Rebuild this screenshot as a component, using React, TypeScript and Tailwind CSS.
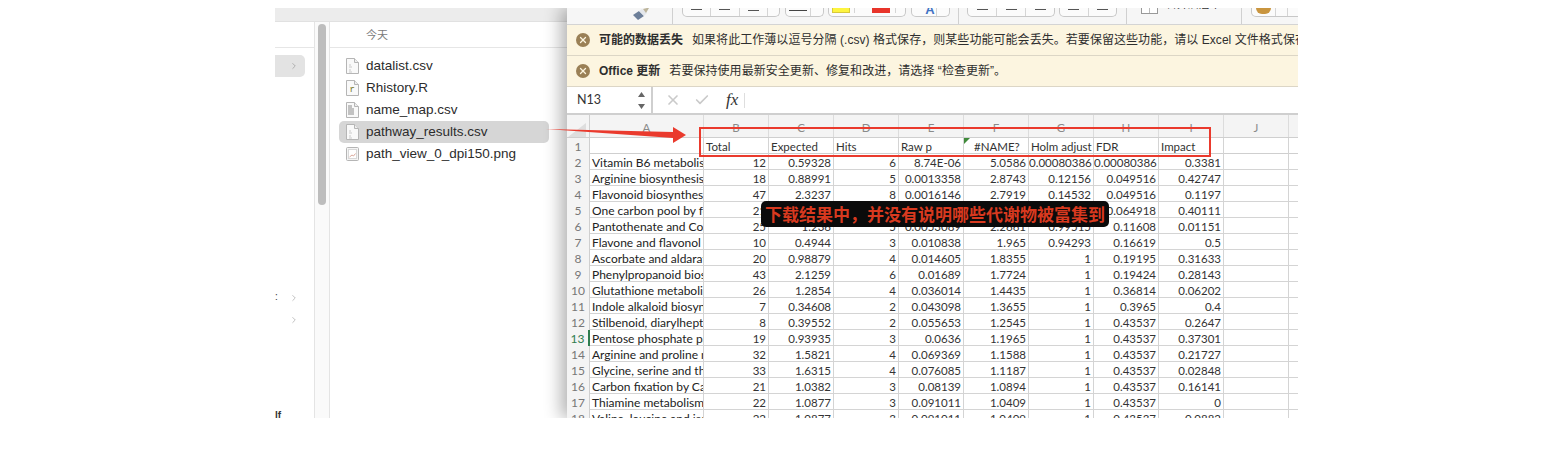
import type { ReactNode } from "react";
import { Check, ChevronRight, X } from "lucide-react";

const COLUMNS = ["A", "B", "C", "D", "E", "F", "G", "H", "I", "J", ""];

const HEADERS = ["", "Total", "Expected", "Hits", "Raw p", "#NAME?", "Holm adjust", "FDR", "Impact", "", ""];

const ROWS = [
  ["Vitamin B6 metabolism", "12", "0.59328", "6", "8.74E-06", "5.0586", "0.00080386", "0.00080386", "0.3381"],
  ["Arginine biosynthesis", "18", "0.88991", "5", "0.0013358", "2.8743", "0.12156", "0.049516", "0.42747"],
  ["Flavonoid biosynthesis", "47", "2.3237", "8", "0.0016146", "2.7919", "0.14532", "0.049516", "0.1197"],
  ["One carbon pool by folate", "21", "1.0382", "5", "0.0028239", "2.5491", "0.25415", "0.064918", "0.40111"],
  ["Pantothenate and CoA", "25", "1.236", "5", "0.0053089", "2.2661", "0.99515", "0.11608", "0.01151"],
  ["Flavone and flavonol", "10", "0.4944", "3", "0.010838", "1.965", "0.94293", "0.16619", "0.5"],
  ["Ascorbate and aldarate", "20", "0.98879", "4", "0.014605", "1.8355", "1", "0.19195", "0.31633"],
  ["Phenylpropanoid biosynthesis", "43", "2.1259", "6", "0.01689", "1.7724", "1", "0.19424", "0.28143"],
  ["Glutathione metabolism", "26", "1.2854", "4", "0.036014", "1.4435", "1", "0.36814", "0.06202"],
  ["Indole alkaloid biosynthesis", "7", "0.34608", "2", "0.043098", "1.3655", "1", "0.3965", "0.4"],
  ["Stilbenoid, diarylheptanoid", "8", "0.39552", "2", "0.055653", "1.2545", "1", "0.43537", "0.2647"],
  ["Pentose phosphate pathway", "19", "0.93935", "3", "0.0636", "1.1965", "1", "0.43537", "0.37301"],
  ["Arginine and proline metabolism", "32", "1.5821", "4", "0.069369", "1.1588", "1", "0.43537", "0.21727"],
  ["Glycine, serine and threonine", "33", "1.6315", "4", "0.076085", "1.1187", "1", "0.43537", "0.02848"],
  ["Carbon fixation by Calvin", "21", "1.0382", "3", "0.08139", "1.0894", "1", "0.43537", "0.16141"],
  ["Thiamine metabolism", "22", "1.0877", "3", "0.091011", "1.0409", "1", "0.43537", "0"],
  ["Valine, leucine and isoleucine", "22", "1.0877", "3", "0.091011", "1.0409", "1", "0.43537", "0.0882"],
];

const FILES = [
  { name: "datalist.csv", mark: "lines" },
  { name: "Rhistory.R", mark: "r" },
  { name: "name_map.csv", mark: "dense" },
  { name: "pathway_results.csv", mark: "lines", selected: true },
  { name: "path_view_0_dpi150.png", mark: "image" },
];

const GRID = "grid grid-cols-[23px_114px_repeat(9,65px)_10px]";

function FileIcon({ mark }: { mark: string }) {
  if (mark === "image") {
    return (
      <svg width="13" height="16" viewBox="0 0 13 16" className="shrink-0">
        <rect x="0.5" y="1.5" width="12" height="13" rx="1" fill="#f4f4f4" stroke="#b5b5b5" />
        <rect x="2.5" y="3.5" width="8" height="9" fill="#fff" stroke="#d8d8d8" />
        <path d="M3.5 11l2.5-2 1.5 1 2-2.5" fill="none" stroke="#dba99c" />
      </svg>
    );
  }
  return (
    <svg width="13" height="16" viewBox="0 0 13 16" className="shrink-0">
      <path d="M0.5 0.5h8l4 4v11h-12z" fill="#f9f9f9" stroke="#b5b5b5" />
      <path d="M8.5 0.5v4h4" fill="#eee" stroke="#b5b5b5" />
      {mark === "r" && (
        <text x="3.5" y="12" fontSize="9" fill="#77772a" fontFamily="Liberation Mono">
          r
        </text>
      )}
      {mark === "lines" && <path d="M3 7h2M3 9h3M3 12h2M3 14h3" stroke="#c9c9c9" />}
      {mark === "dense" && <path d="M3 3v10M5 3v10M7 6v7" stroke="#a5a5a5" strokeWidth="1.3" />}
    </svg>
  );
}

function FinderPane() {
  return (
    <div className="flex w-[292px] shrink-0 flex-col bg-white font-['Liberation_Sans','Noto_Sans_CJK_SC',sans-serif]">
      <div className="h-[14px] shrink-0 border-b border-[#e1e1e1] bg-[#ececec]" />
      <div className="flex min-h-0 flex-1">
        <div className="relative w-[40px] shrink-0 border-r border-[#e4e4e4] bg-white">
          <div className="h-[26px] border-b border-[#e6e6e6]" />
          <div className="mt-[7px] flex h-[22px] w-[30px] items-center justify-end rounded-r-[5px] bg-[#e3e3e3] pr-1.5">
            <ChevronRight size={10} className="text-[#a5a5a5]" />
          </div>
          <div className="mt-[210px] flex h-[22px] w-[30px] items-center justify-end pr-1.5">
            <ChevronRight size={10} className="text-[#b5b5b5]" />
          </div>
          <div className="flex h-[22px] w-[30px] items-center justify-end pr-1.5">
            <ChevronRight size={10} className="text-[#b5b5b5]" />
          </div>
          <div className="absolute top-[269px] left-0 text-[10px] leading-3 text-[#333]">:</div>
          <div className="absolute top-[388px] left-0 text-[10px] leading-3 font-bold text-[#333]">lf</div>
        </div>
        <div className="w-[15px] shrink-0 border-r border-[#e4e4e4] bg-[#fafafa] px-[3px]">
          <div className="mt-[2px] h-[181px] w-[8px] rounded-full bg-[#bdbdbd]" />
        </div>
        <div className="min-w-0 flex-1">
          <div className="flex h-[26px] items-center border-b border-[#e6e6e6] pt-[2px] pl-[36px] text-[11px] text-[#7a7a7a]">
            今天
          </div>
          <div className="flex flex-col pt-[7px] pr-[18px] pl-[9px]">
            {FILES.map((file) => (
              <div
                key={file.name}
                className={`flex h-[22px] items-center gap-[7px] rounded-[5px] pl-[7px] text-[13.5px] text-[#2c2c2c] ${
                  file.selected ? "bg-[#d6d6d6]" : ""
                }`}
              >
                <FileIcon mark={file.mark} />
                <span className="whitespace-nowrap">{file.name}</span>
              </div>
            ))}
          </div>
        </div>
      </div>
    </div>
  );
}

function ToolGroup({ className, children }: { className: string; children: ReactNode }) {
  return (
    <div className={`flex h-[9px] shrink-0 overflow-hidden rounded-b-[5px] border border-t-0 border-[#c8c8c8] bg-[#fbfbfb] ${className}`}>
      {children}
    </div>
  );
}

function DashCell({ low, last }: { low?: boolean; last?: boolean }) {
  return (
    <div className={`flex h-full flex-1 justify-center ${last ? "" : "border-r border-[#d5d5d5]"}`}>
      <div className={`h-[1px] w-[11px] bg-[#555] ${low ? "mt-[2px]" : "mt-px"}`} />
    </div>
  );
}

function Toolbar() {
  return (
    <div className="flex h-[17px] shrink-0 items-start overflow-hidden border-b border-[#d4d4d4] bg-[#f6f6f6] pl-[66px]">
      <div className="h-[16px] w-[40px] shrink-0 border-r border-[#d0d0d0]">
        <svg width="18" height="12" viewBox="0 0 18 12">
          <path d="M0 7l6-4 5 5-6 4z" fill="#6d7f99" />
          <path d="M6 3l3-2 5 4-3 3z" fill="#e4e7ec" />
          <path d="M10 1l4-1 2 0-3 5z" fill="#bdb59c" />
        </svg>
      </div>
      <ToolGroup className="ml-[9px] w-[98px]">
        <DashCell />
        <DashCell />
        <DashCell low />
        <div className="h-full w-[11px]" />
      </ToolGroup>
      <ToolGroup className="ml-[5px] w-[39px]">
        <div className="flex h-full flex-1 justify-center border-r border-[#d5d5d5]">
          <div className="mt-[2px] h-[1px] w-[18px] bg-[#444]" />
        </div>
        <div className="h-full w-[12px]" />
      </ToolGroup>
      <ToolGroup className="ml-[4px] w-[78px]">
        <div className="ml-[3px] h-[5px] w-[18px] border border-t-0 border-[#d8c93a] bg-[#fdf43f]" />
        <div className="ml-[4px] h-[5px] w-px bg-[#d5d5d5]" />
        <div className="ml-[17px] h-[5px] w-[18px] bg-[#e8342a]" />
        <div className="ml-[5px] h-[5px] w-px bg-[#d5d5d5]" />
      </ToolGroup>
      <ToolGroup className="ml-[5px] w-[39px]">
        <div className="flex h-full flex-1 justify-center overflow-hidden border-r border-[#d5d5d5] pl-[12px]">
          <span className="mt-[-4px] font-['Liberation_Sans'] text-[13px] leading-3 font-bold text-[#3f72c4]">A</span>
        </div>
        <div className="h-full w-[12px]" />
      </ToolGroup>
      <div className="ml-[8px] h-[16px] w-px shrink-0 bg-[#d0d0d0]" />
      <ToolGroup className="ml-[8px] w-[88px]">
        <DashCell />
        <DashCell />
        <DashCell last />
      </ToolGroup>
      <ToolGroup className="ml-[4px] w-[58px]">
        <DashCell />
        <DashCell last />
      </ToolGroup>
      <div className="ml-[9px] h-[16px] w-px shrink-0 bg-[#d0d0d0]" />
      <div className="ml-[14px] flex h-[6px] w-[17px] shrink-0 justify-center border border-t-0 border-[#999] bg-white">
        <div className="h-full w-px bg-[#bbb]" />
      </div>
      <div className="mt-[-11px] ml-[8px] w-[75px] shrink-0 overflow-hidden text-[11px] leading-[14px] whitespace-nowrap text-[#333]">
        合并后居中 ·
      </div>
      <div className="h-[16px] w-px shrink-0 bg-[#d0d0d0]" />
      <ToolGroup className="ml-[9px] w-[60px]">
        <div className="flex h-full w-[24px] justify-center border-r border-[#d5d5d5]">
          <div className="h-[6px] w-[15px] rounded-b-full bg-[#c9953f]" />
        </div>
        <div className="h-full w-[12px] border-r border-[#d5d5d5]" />
      </ToolGroup>
    </div>
  );
}

function MessageBar({ title, text }: { title: string; text: string }) {
  return (
    <div className="flex h-[31px] shrink-0 items-center border-b border-[#dcd6c6] bg-[#fcf5e0] pl-[9px] font-['Liberation_Sans','Noto_Sans_CJK_SC',sans-serif] whitespace-nowrap">
      <div className="flex size-[14px] shrink-0 items-center justify-center rounded-full bg-[#9a8056]">
        <X size={10} strokeWidth={3} className="text-[#fcf5e0]" />
      </div>
      <span className="ml-[9px] text-[12px] font-semibold text-[#2e2e2e]">{title}</span>
      <span className="ml-[9px] text-[12px] tracking-[0.05px] text-[#2e2e2e]">{text}</span>
    </div>
  );
}

function FormulaBar() {
  return (
    <div className="flex h-[28px] shrink-0 items-center border-b-2 border-[#cfcfcf] bg-white">
      <div className="flex h-full w-[86px] shrink-0 items-center justify-between border-r-2 border-[#cfcfcf] pr-[6px] pl-[10px] text-[12.5px] text-[#333]">
        N13
        <svg width="7" height="17" viewBox="0 0 7 17" className="text-[#666]">
          <path d="M3.5 0L7 5H0z M3.5 17L0 12h7z" fill="currentColor" />
        </svg>
      </div>
      <X size={16} strokeWidth={2.5} className="ml-[12px] text-[#cacaca]" />
      <Check size={16} strokeWidth={2.5} className="ml-[13px] text-[#cacaca]" />
      <span className="ml-[16px] font-['Liberation_Serif'] text-[17px] text-[#333] italic">fx</span>
      <div className="ml-[6px] h-[15px] w-px bg-[#dedede]" />
    </div>
  );
}

function Sheet() {
  return (
    <div className="text-[11.5px] leading-[17px] text-[#333]">
      <div className={`${GRID} h-[23px] border-b border-[#cfcfcf] bg-[#f4f4f4] leading-[15px] text-[#8a8a8a]`}>
        <div className="relative border-r border-[#cfcfcf]">
          <div className="absolute right-[3px] bottom-0 size-0 border-b-[14px] border-l-[18px] border-b-[#dedede] border-l-transparent" />
        </div>
        {COLUMNS.map((col, i) => (
          <div key={i} className="flex items-center justify-center border-r border-[#dcdcdc] pt-[3px] last:border-r-0">
            {col}
          </div>
        ))}
      </div>
      <div className={`${GRID} h-[16px] border-b border-[#cfcfcf] bg-white`}>
        <div className="border-r border-[#cfcfcf] bg-[#f4f4f4] text-center text-[12px] text-[#777]">1</div>
        {HEADERS.map((head, i) => (
          <div key={i} className="relative overflow-hidden border-r border-[#d4d4d4] pl-[2px] whitespace-nowrap last:border-r-0">
            {head === "#NAME?" && (
              <div className="absolute top-0 left-0 size-0 border-t-[6px] border-r-[6px] border-t-[#3f8a3a] border-r-transparent" />
            )}
            <span className={head === "#NAME?" ? "pl-[8px]" : ""}>{head}</span>
          </div>
        ))}
      </div>
      {ROWS.map((row, r) => (
        <div key={r} className={`${GRID} h-[16px] border-b border-[#d4d4d4] bg-white`}>
          <div
            className={`bg-[#f4f4f4] text-center text-[12px] ${
              r === 11 ? "border-r-2 border-[#2f7d4f] text-[#2f7d4f]" : "border-r border-[#cfcfcf] text-[#777]"
            }`}
          >
            {r + 2}
          </div>
          {row.map((cell, c) => (
            <div
              key={c}
              className={`overflow-hidden border-r border-[#d4d4d4] whitespace-nowrap ${
                c === 0 ? "pl-[2px] text-[12px] text-[#222]" : "pr-[2px] text-right"
              }`}
            >
              {cell}
            </div>
          ))}
          <div className="border-r border-[#d4d4d4]" />
          <div />
        </div>
      ))}
    </div>
  );
}

function ExcelPane() {
  return (
    <div className="relative z-10 flex min-w-0 flex-1 flex-col overflow-hidden bg-white font-['Lato','Noto_Sans_CJK_SC',sans-serif] shadow-[-6px_0_16px_rgba(0,0,0,0.3)]">
      <Toolbar />
      <MessageBar
        title="可能的数据丢失"
        text="如果将此工作薄以逗号分隔 (.csv) 格式保存，则某些功能可能会丢失。若要保留这些功能，请以 Excel 文件格式保存。"
      />
      <MessageBar title="Office 更新" text="若要保持使用最新安全更新、修复和改进，请选择 “检查更新”。" />
      <FormulaBar />
      <Sheet />
    </div>
  );
}

export default function App() {
  return (
    <div className="relative h-[462px] w-[1568px] bg-white pt-2 pl-[275px]">
      <div className="flex h-[410px] w-[1023px] overflow-hidden">
        <FinderPane />
        <ExcelPane />
      </div>

      {/* annotations on top of the screenshot */}
      <svg className="absolute top-[120px] left-[545px] z-20" width="145" height="30" viewBox="0 0 145 30">
        <path d="M1 9L128 12L128 7L141 15L128 23L128 18Z" fill="#ea3a2d" />
      </svg>
      <div className="absolute top-[127px] left-[699px] z-20 h-[30px] w-[512px] border-2 border-[#ea3a2d]" />
      <div className="absolute top-[201px] left-[761px] z-20 flex h-[26px] w-[348px] items-center justify-center rounded-[5px] bg-[#0b0b0b] font-['Noto_Sans_CJK_SC',sans-serif] text-[17px] font-bold whitespace-nowrap text-[#d8391f]">
        下载结果中，并没有说明哪些代谢物被富集到
      </div>
    </div>
  );
}
